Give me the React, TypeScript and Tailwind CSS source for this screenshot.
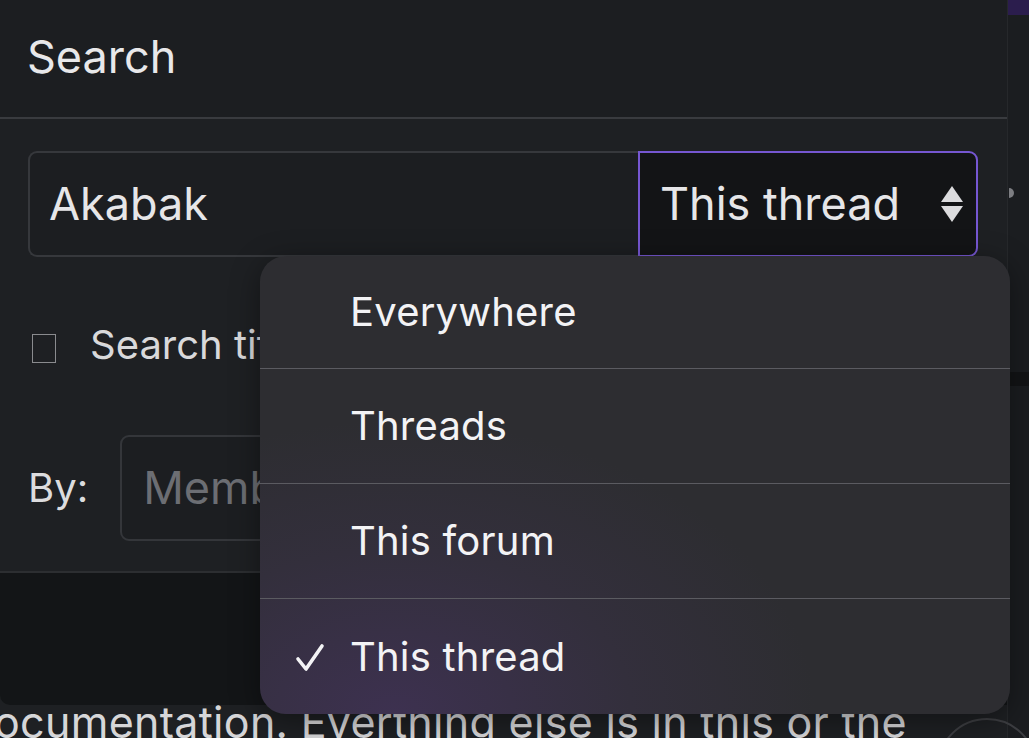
import React from "react";

const font = { fontFamily: "Inter, 'Noto Sans', sans-serif" };

function Item({ label, checked, last }: { label: string; checked?: boolean; last?: boolean }) {
  return (
    <div
      className={`relative flex h-[115px] items-center pl-[90px] text-[40px] text-[#f3f3f5] ${
        last ? "" : "border-b border-[#5b5b61]"
      }`}
    >
      {checked && (
        <svg className="absolute left-[35px] top-[44px]" width="30" height="30" viewBox="0 0 30 30">
          <path d="M3 16 L11 26 L27 3" fill="none" stroke="#f3f3f5" strokeWidth="3.6" strokeLinecap="round" strokeLinejoin="round" />
        </svg>
      )}
      <span className="tracking-[0.2px]">{label}</span>
    </div>
  );
}

export default function App() {
  return (
    <div className="relative flex h-[738px] w-[1029px] overflow-hidden bg-[#1c1e21]" style={font}>
      {/* main panel */}
      <div className="flex w-[1008px] shrink-0 flex-col bg-[#1e2023] border-r border-[#26282b]">
        <div className="flex h-[119px] shrink-0 items-center border-b-2 border-[#393b3f] bg-[#1c1e21] pl-[27px] pb-[4px] text-[45px] text-[#e8e8ea]">
          Search
        </div>
        <div className="flex shrink-0 flex-col px-[28px] pt-[32px]">
          <div className="flex h-[106px] w-[950px] shrink-0">
            <div className="flex flex-1 items-center rounded-l-[9px] border-2 border-r-0 border-[#36383c] bg-[#1c1e21] pl-[19px] text-[45px] text-[#e6e6e8]">
              Akabak
            </div>
            <div className="flex w-[340px] items-center justify-between rounded-r-[9px] border-2 border-[#7657d2] bg-[#131416] pl-[20px] pr-[12px] text-[45px] text-[#e6e6e8]">
              <span>This thread</span>
              <svg width="24" height="38" viewBox="0 0 24 38">
                <path d="M12 1 L23 17 L1 17 Z" fill="#dcdcde" />
                <path d="M1 21 L23 21 L12 37 Z" fill="#dcdcde" />
              </svg>
            </div>
          </div>
          <div className="mt-[75px] flex h-[32px] shrink-0 items-center">
            <div className="ml-[4px] h-[29px] w-[24px] border-[1.5px] border-[#8a8b8e]" />
            <span className="ml-[34px] mb-[7px] text-[40px] text-[#d9d9db]">Search titles only</span>
          </div>
          <div className="mt-[71px] flex h-[106px] shrink-0 items-center">
            <span className="text-[40px] text-[#dcdcde]">By:</span>
            <div className="ml-[32px] flex h-[106px] flex-1 items-center rounded-[9px] border-2 border-[#34363a] bg-[#1c1e21] pl-[21px] text-[45px] text-[#6c6e73]">
              Member
            </div>
          </div>
        </div>
        <div className="mt-[30px] h-[2px] shrink-0 bg-[#2c2e31]" />
        <div className="h-[132px] shrink-0 rounded-bl-[10px] bg-[#131517]" />
        <div className="mt-[-6px] ml-[-6px] shrink-0 whitespace-nowrap text-[43px] leading-[46px] tracking-[0.3px] text-[#d6d6d8]">
          ocumentation. Everthing else is in this or the
        </div>
      </div>
      {/* right strip */}
      <div className="flex flex-1 flex-col bg-[#1b1d20]">
        <div className="h-[15px] shrink-0 bg-[#2b1d4d]" />
        <div className="mt-[173px] ml-[1px] h-[10px] w-[5px] shrink-0 rounded-r-full bg-[#7d7e82]" />
        <div className="mt-[174px] h-[14px] shrink-0 bg-[#131416]" />
      </div>
      {/* circle */}
      <div className="absolute left-[937px] top-[718px] h-[100px] w-[100px] rounded-full border-2 border-[#3d3e42]" />
      {/* dropdown menu */}
      <div className="absolute left-[260px] top-[256px] w-[750px] overflow-hidden rounded-[26px] bg-[radial-gradient(ellipse_70%_80%_at_18%_100%,#3d3150_0%,#332f3c_45%,#2d2d31_80%)] shadow-[0_6px_30px_rgba(0,0,0,0.4)]">
        <div className="flex h-[113px] items-center border-b border-[#5b5b61] pl-[90px] text-[40px] text-[#f3f3f5]">
          <span className="tracking-[0.2px]">Everywhere</span>
        </div>
        <Item label="Threads" />
        <Item label="This forum" />
        <Item label="This thread" checked last />
      </div>
    </div>
  );
}
